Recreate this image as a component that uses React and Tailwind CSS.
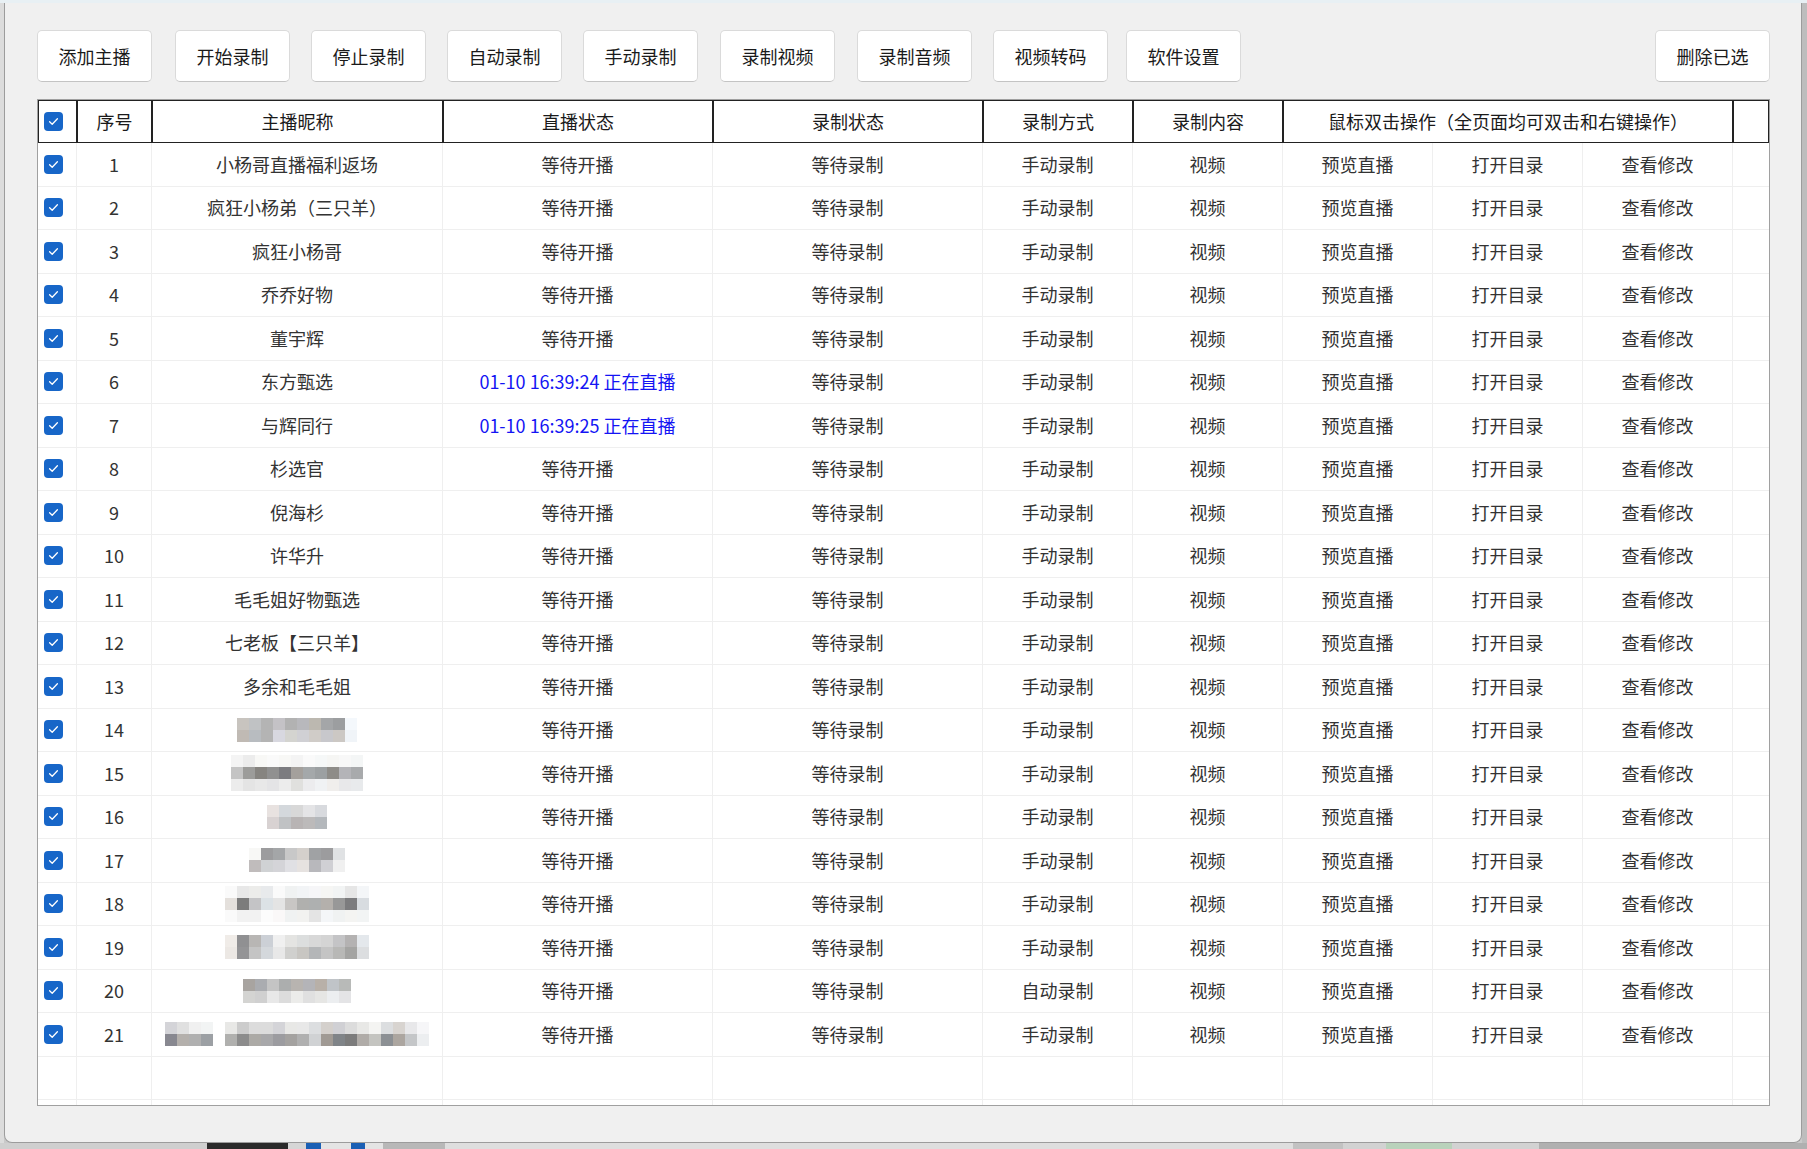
import React from "react";

const FONT = { fontFamily: '"Microsoft YaHei", "Noto Sans CJK SC", "Noto Sans", sans-serif' };

const BUTTONS = [
  { t: "添加主播", m: "ml-0" },
  { t: "开始录制", m: "ml-[23px]" },
  { t: "停止录制", m: "ml-[21px]" },
  { t: "自动录制", m: "ml-[21px]" },
  { t: "手动录制", m: "ml-[21px]" },
  { t: "录制视频", m: "ml-[22px]" },
  { t: "录制音频", m: "ml-[22px]" },
  { t: "视频转码", m: "ml-[21px]" },
  { t: "软件设置", m: "ml-[18px]" },
];

const ROWS = [
  { n: "小杨哥直播福利返场" },
  { n: "疯狂小杨弟（三只羊）" },
  { n: "疯狂小杨哥" },
  { n: "乔乔好物" },
  { n: "董宇辉" },
  { n: "东方甄选", live: "01-10 16:39:24 正在直播" },
  { n: "与辉同行", live: "01-10 16:39:25 正在直播" },
  { n: "杉选官" },
  { n: "倪海杉" },
  { n: "许华升" },
  { n: "毛毛姐好物甄选" },
  { n: "七老板【三只羊】" },
  { n: "多余和毛毛姐" },
  { m: [
    ["c8c4bf","c0c2c4","b4b4b4","c4c2c6","b2b2b2","b8b8bc","bcb8b0","a4a6a8","9c9ea0","f4f8fc"],
    ["c0bab4","b8bcc0","b4b4b4","d8d8e0","d4d4d0","d0d0d4","d0ccc8","c8c8cc","ccc8c4","f0f4f8"],
  ] },
  { m: [
    ["f4f4f4","ececec","f8f8f6","fafafa","f8f8f6","f4f4f4","fafafa","f6f8f8","f6f6f4","f8f8f8","f4f6f6"],
    ["c4c4c4","9c9c9a","868480","909090","7c7c80","a4a09c","a4a8aa","9ca0a2","8e8c88","b4b4b8","a8aaac"],
    ["ececec","e4e4e4","e8e8e8","e4e4e6","ececec","e0e0de","ececee","f0f2f4","f0eeec","e8e8ea","e8eaec"],
  ] },
  { m: [
    ["e8e2e0","d4d8dc","d8d8d8","e4e4e6","d8dade"],
    ["d8d2d2","c0c2c4","b8b4b4","bcbaba","b4b8bc"],
  ] },
  { m: [
    ["f8f8f6","9c9c9e","a4a6a8","c8c8c8","d4d0cc","a0a2a4","9c9c9e","e0e2e4"],
    ["c0bcbc","d0d2d4","d4d4d8","e0e0e4","e6e2e0","b8b8bc","d0d0d4","f0f0f0"],
  ] },
  { m: [
    ["fafafa","e8e8e8","ececea","e8eaec","fafafa","f0f2f2","f2f4f6","f6f6f8","f6f6f4","f2f4f4","e6e6e6","f4f6f8"],
    ["e4e0dc","7c7c7c","c4c4c6","dce2e6","e4e4e4","c8c6c4","b0b0ae","aeb0b0","b4b0ac","989898","7c7c7e","d8dce0"],
    ["fafafa","f2f2f2","f2f2f2","fcfcfc","faf8f8","f0f2f2","f2f2f0","e4e4e4","f4f6f8","f0f2f2","f4f4f2","f2f4f4"],
  ] },
  { m: [
    ["f0ece8","909092","b8b6b4","ccd0d6","f0f0f0","e4e4e2","dcdede","d8d8d8","d4d4d4","c4c4c6","b4b2b2","e4e8ec"],
    ["ece8e4","949496","c4c4c4","d4d8dc","e8e8e8","d0d0ce","c8c6c2","b4b6b8","c4c4c4","b8b8b6","a4a4a2","dcdee0"],
  ] },
  { auto: true, m: [
    ["a8a4a0","aaacb0","c4c4c4","acaeae","b8b4b0","b4b4b8","b8b0a8","c0c4c8","b8bab8"],
    ["d4d4d2","d0d0d0","e8e8e8","dcdcdc","ececea","e0e0e0","e6e6e4","eceef0","e4e4e6"],
  ] },
  { m: [
    ["d4d4d8","e0e0e0","f0f0f0","f2f4f4","ffffff","e8e8e6","cccccc","dcdcdc","dcdcdc","d4d4d8","e8e8e6","e8e8e8","dcdee0","d4d0cc","d0d0d4","dcdcdc","e8e8e6","f4f4f2","dcdee0","d8d4d0","e8e8ea","f6f6f8"],
    ["888890","b4b0ac","b0b0b0","9ca0a4","ffffff","b0b0ae","8c8c8c","acaaa6","a8a8aa","9c9ca0","a4a2a0","b0b0b0","d0d2d4","a09a94","808488","7c7c7c","b0aca8","c4c4c0","8c9094","aca6a0","c4c6c8","eceef0"],
  ] },
];

function Check() {
  return (
    <div className="w-[19px] h-[19px] rounded-[4px] bg-[#1766c8] flex items-center justify-center">
      <svg width="13" height="13" viewBox="0 0 13 13">
        <path d="M2.6 6.8 L5.2 9.3 L10.4 3.8" fill="none" stroke="#ffffff" strokeWidth="1.3" strokeLinecap="round" strokeLinejoin="round" />
      </svg>
    </div>
  );
}

function Mosaic({ m }) {
  return (
    <div className="flex flex-col">
      {m.map((r, i) => (
        <div key={i} className="flex">
          {r.map((c, j) => (
            <div key={j} className="w-[12px] h-[12px]" style={{ backgroundColor: "#" + c }} />
          ))}
        </div>
      ))}
    </div>
  );
}

const BC = "border-r border-b border-[#efefef] flex items-center justify-center shrink-0";

function BodyRow({ r, i }) {
  const empty = !r;
  return (
    <div className="flex h-[43.5px] shrink-0">
      <div className={"w-[39px] border-r border-b border-[#efefef] flex items-center pl-[6px] shrink-0"}>
        {!empty && <Check />}
      </div>
      <div className={"w-[75px] " + BC}>{!empty && i + 1}</div>
      <div className={"w-[291px] " + BC}>
        {!empty && (r.m ? <Mosaic m={r.m} /> : r.n)}
      </div>
      <div className={"w-[270px] " + BC}>
        {!empty && (r.live ? <span className="text-[#1414f4]">{r.live}</span> : "等待开播")}
      </div>
      <div className={"w-[270px] " + BC}>{!empty && "等待录制"}</div>
      <div className={"w-[150px] " + BC}>{!empty && (r.auto ? "自动录制" : "手动录制")}</div>
      <div className={"w-[150px] " + BC}>{!empty && "视频"}</div>
      <div className={"w-[150px] " + BC}>{!empty && "预览直播"}</div>
      <div className={"w-[150px] " + BC}>{!empty && "打开目录"}</div>
      <div className={"w-[150px] " + BC}>{!empty && "查看修改"}</div>
      <div className={"w-[36px] border-b border-[#efefef] shrink-0"} />
    </div>
  );
}

const HC = "border border-[#222222] flex items-center justify-center shrink-0 h-full";

export default function App() {
  return (
    <div className="w-[1807px] h-[1149px] overflow-hidden bg-[#c9c9c9] flex flex-col text-[18px]" style={FONT}>
      <div className="h-[3px] bg-[#e8f0f4] shrink-0" />
      <div className="flex h-[1140px] shrink-0">
        <div className="w-[4px] bg-[#dcdcdc] shrink-0" />
        <div className="w-[1798px] h-[1140px] bg-[#f0f0f0] border-l border-r border-b border-[#9c9c9c] rounded-b-[8px] pt-[27px] pl-[32px] pr-[31px] flex flex-col shrink-0">
          <div className="flex h-[52px] w-[1733px]">
            {BUTTONS.map((b) => (
              <button key={b.t} className={b.m + " w-[115px] h-[52px] bg-white border border-[#dadada] border-b-[#c4c4c4] rounded-[5px] text-[#1a1a1a] flex items-center justify-center"}>
                {b.t}
              </button>
            ))}
            <button className="ml-auto w-[115px] h-[52px] bg-white border border-[#dadada] border-b-[#c4c4c4] rounded-[5px] text-[#1a1a1a] flex items-center justify-center">
              删除已选
            </button>
          </div>
          <div className="mt-[17px] w-[1733px] h-[1007px] bg-white border border-[#a0a0a0] flex flex-col overflow-hidden text-[#333333]">
            <div className="flex h-[43px] shrink-0 text-[#1a1a1a]">
              <div className={"w-[39px] border border-[#222222] flex items-center pl-[5px] shrink-0 h-full"}>
                <Check />
              </div>
              <div className={"w-[75px] " + HC}>序号</div>
              <div className={"w-[291px] " + HC}>主播昵称</div>
              <div className={"w-[270px] " + HC}>直播状态</div>
              <div className={"w-[270px] " + HC}>录制状态</div>
              <div className={"w-[150px] " + HC}>录制方式</div>
              <div className={"w-[150px] " + HC}>录制内容</div>
              <div className={"w-[450px] " + HC}>鼠标双击操作（全页面均可双击和右键操作）</div>
              <div className={"w-[36px] " + HC} />
            </div>
            {ROWS.map((r, i) => (
              <BodyRow key={i} r={r} i={i} />
            ))}
            <BodyRow r={null} i={21} />
            <BodyRow r={null} i={22} />
          </div>
        </div>
        <div className="flex-1 bg-[#bdbdbd]" />
      </div>
      <div className="flex-1 flex items-stretch">
        <div className="w-[207px] bg-[#cfcfcf]" />
        <div className="w-[81px] bg-[#2a2a2a]" />
        <div className="w-[18px] bg-[#d6d6d6]" />
        <div className="w-[15px] bg-[#1a5fb4]" />
        <div className="w-[30px] bg-[#e4e4e4]" />
        <div className="w-[14px] bg-[#1a5fb4]" />
        <div className="w-[18px] bg-[#e4e4e4]" />
        <div className="w-[62px] bg-[#b8b8b8]" />
        <div className="w-[848px] bg-[#dedede]" />
        <div className="w-[50px] bg-[#c2c2c2]" />
        <div className="w-[43px] bg-[#d2d2d2]" />
        <div className="w-[66px] bg-[#b9d2bb]" />
        <div className="w-[87px] bg-[#d2d2d2]" />
        <div className="flex-1 bg-[#b0b0b0]" />
      </div>
    </div>
  );
}
